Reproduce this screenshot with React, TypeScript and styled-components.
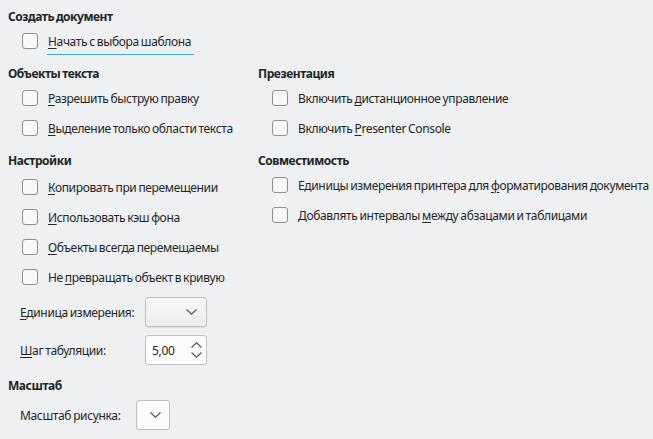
import React from "react";
import styled, { createGlobalStyle } from "styled-components";

const GlobalStyle = createGlobalStyle`
  html, body {
    margin: 0;
    padding: 0;
    background: #eff0f1;
  }
  body {
    font-family: "Noto Sans", "DejaVu Sans", sans-serif;
    font-size: 12px;
    letter-spacing: -0.35px;
    word-spacing: -0.8px;
    color: #232627;
  }
`;

const Page = styled.div`
  width: 653px;
  height: 439px;
  box-sizing: border-box;
  padding: 7px 0 0 8px;
  display: grid;
  grid-template-columns: 250px 1fr;
  grid-auto-rows: min-content;
  row-gap: 8px;
  overflow: hidden;
`;

const Section = styled.div<{ $span?: boolean }>`
  display: flex;
  flex-direction: column;
  grid-column: ${(p) => (p.$span ? "1 / -1" : "auto")};
`;

const Column = styled.div`
  display: flex;
  flex-direction: column;
  gap: 8px;
`;

const Heading = styled.div<{ $top?: number }>`
  height: 19px;
  line-height: 19px;
  font-weight: bold;
  letter-spacing: -0.45px;
  white-space: nowrap;
  margin-top: ${(p) => p.$top || 0}px;
`;

const Rows = styled.div<{ $offset?: number }>`
  display: flex;
  flex-direction: column;
  padding-left: 14px;
  margin-top: ${(p) => p.$offset || 0}px;
`;

const Row = styled.label`
  height: 30px;
  display: flex;
  align-items: center;
  gap: 10px;
  white-space: nowrap;
`;

const Box = styled.span`
  width: 16px;
  height: 16px;
  box-sizing: border-box;
  border: 1px solid #8e9092;
  border-radius: 3px;
  background: #f8f8f8;
  flex-shrink: 0;
`;

const Text = styled.span<{ $focused?: boolean }>`
  position: relative;
  &::after {
    content: "";
    display: ${(p) => (p.$focused ? "block" : "none")};
    position: absolute;
    left: -1px;
    right: -3px;
    bottom: -5px;
    height: 1px;
    background: #3daee9;
  }
`;

const Key = styled.span`
  text-decoration: underline;
  text-underline-offset: 2px;
`;

const Fields = styled.div`
  display: flex;
  flex-direction: column;
  gap: 8px;
  padding-left: 12px;
  margin-top: 5px;
`;

const Field = styled.div`
  display: flex;
  align-items: center;
  height: 30px;
`;

const FieldLabel = styled.span<{ $width: number }>`
  width: ${(p) => p.$width}px;
  white-space: nowrap;
`;

const Combo = styled.div<{ $width: number }>`
  width: ${(p) => p.$width}px;
  height: 30px;
  box-sizing: border-box;
  border: 1px solid #bcbebf;
  border-radius: 3px;
  background: linear-gradient(#f6f7f7, #eceded);
  box-shadow: 0 1px 1px rgba(0, 0, 0, 0.08);
  display: flex;
  align-items: center;
  justify-content: flex-end;
  padding-right: 9px;
`;

const PlainCombo = styled(Combo)`
  background: #fcfcfc;
  box-shadow: none;
  padding-right: 8px;
`;

const Spin = styled.div`
  width: 62px;
  height: 30px;
  box-sizing: border-box;
  border: 1px solid #bcbebf;
  border-radius: 3px;
  background: #fcfcfc;
  display: flex;
  align-items: center;
  justify-content: space-between;
  padding: 0 4px 0 6px;
`;

const Arrows = styled.div`
  display: flex;
  flex-direction: column;
  gap: 4px;
`;

function Chevron({ up }: { up?: boolean }) {
  return (
    <svg width="11" height="6" viewBox="0 0 11 6">
      <path
        d={up ? "M0.5 5.5 L5.5 0.8 L10.5 5.5" : "M0.5 0.5 L5.5 5.2 L10.5 0.5"}
        fill="none"
        stroke="#4d4f50"
        strokeWidth="1.1"
      />
    </svg>
  );
}

function Check({ children, focused }: { children: React.ReactNode; focused?: boolean }) {
  return (
    <Row>
      <Box />
      <Text $focused={focused}>{children}</Text>
    </Row>
  );
}

export default function App() {
  return (
    <>
      <GlobalStyle />
      <Page>
        <Section $span>
          <Heading>Создать документ</Heading>
          <Rows>
            <Check focused>
              <Key>Н</Key>ачать с выбора шаблона
            </Check>
          </Rows>
        </Section>

        <Column>
          <Section>
            <Heading>Объекты текста</Heading>
            <Rows>
              <Check>
                <Key>Р</Key>азрешить быструю правку
              </Check>
              <Check>
                <Key>В</Key>ыделение только области текста
              </Check>
            </Rows>
          </Section>
          <Section>
            <Heading>Настройки</Heading>
            <Rows $offset={2}>
              <Check>
                <Key>К</Key>опировать при перемещении
              </Check>
              <Check>
                <Key>И</Key>спользовать кэш фона
              </Check>
              <Check>
                <Key>О</Key>бъекты всегда перемещаемы
              </Check>
              <Check>
                Не <Key>п</Key>ревращать объект в кривую
              </Check>
            </Rows>
            <Fields>
              <Field>
                <FieldLabel $width={125}>
                  <Key>Е</Key>диница измерения:
                </FieldLabel>
                <Combo $width={62}>
                  <Chevron />
                </Combo>
              </Field>
              <Field>
                <FieldLabel $width={125}>
                  <Key>Ш</Key>аг табуляции:
                </FieldLabel>
                <Spin>
                  <span>5,00</span>
                  <Arrows>
                    <Chevron up />
                    <Chevron />
                  </Arrows>
                </Spin>
              </Field>
            </Fields>
          </Section>
          <Section>
            <Heading $top={3}>Масштаб</Heading>
            <Fields>
              <Field>
                <FieldLabel $width={116}>
                  Масштаб рис<Key>у</Key>нка:
                </FieldLabel>
                <PlainCombo $width={34}>
                  <Chevron />
                </PlainCombo>
              </Field>
            </Fields>
          </Section>
        </Column>

        <Column>
          <Section>
            <Heading>Презентация</Heading>
            <Rows>
              <Check>
                Включить <Key>д</Key>истанционное управление
              </Check>
              <Check>
                Включить <Key>P</Key>resenter Console
              </Check>
            </Rows>
          </Section>
          <Section>
            <Heading>Совместимость</Heading>
            <Rows>
              <Check>
                Единицы измерения принтера для <Key>ф</Key>орматирования документа
              </Check>
              <Check>
                Добавлять интервалы <Key>м</Key>ежду абзацами и таблицами
              </Check>
            </Rows>
          </Section>
        </Column>
      </Page>
    </>
  );
}
